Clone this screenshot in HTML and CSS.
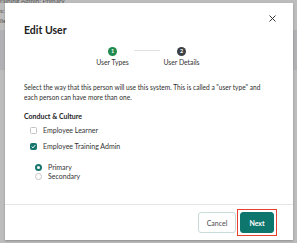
FILE: index.html
```html
<!DOCTYPE html>
<html lang="en">
<head>
  <meta charset="UTF-8">
  <meta name="viewport" content="width=device-width, initial-scale=1.0">
  <title>Edit User</title>
  <link rel="stylesheet" href="styles.css">
</head>
<body>

  <!-- Page behind the modal -->
  <div class="page">
    <div class="page-top">
      <p>raining Admin: Primary</p>
      <p>s:</p>
      <p>lle</p>
    </div>
    <div class="page-band"></div>
  </div>

  <!-- Edit User Modal -->
  <div class="modal">
    <button class="close-btn" aria-label="Close">
      <svg width="7" height="7" viewBox="0 0 7 7">
        <path d="M0.5 0.5 L6.5 6.5 M6.5 0.5 L0.5 6.5" stroke="#333" stroke-width="1" fill="none"/>
      </svg>
    </button>

    <div class="modal-body">
      <h2 class="modal-title">Edit User</h2>

      <div class="stepper">
        <div class="step step-done">
          <span class="step-num">1</span>
          <span class="step-label">User Types</span>
        </div>
        <div class="step-line"></div>
        <div class="step">
          <span class="step-num">2</span>
          <span class="step-label">User Details</span>
        </div>
      </div>

      <p class="intro">Select the way that this person will use this system. This is called a "user type" and each person can have more than one.</p>

      <h3 class="group-title">Conduct &amp; Culture</h3>
      <div class="check-list">
        <label class="check-row"><span class="checkbox"></span>Employee Learner</label>
        <label class="check-row">
          <span class="checkbox checked">
            <svg width="5" height="5" viewBox="0 0 5 5">
              <path d="M0.7 2.6 L2 3.8 L4.3 1.1" stroke="#fff" stroke-width="1" fill="none"/>
            </svg>
          </span>Employee Training Admin
        </label>
      </div>

      <div class="radio-list">
        <label class="radio-row"><span class="radio selected"></span>Primary</label>
        <label class="radio-row"><span class="radio"></span>Secondary</label>
      </div>
    </div>

    <div class="modal-footer">
      <button class="btn btn-cancel">Cancel</button>
      <span class="highlight">
        <button class="btn btn-next">Next</button>
      </span>
    </div>
  </div>

</body>
</html>
```

FILE: styles.css
```css
* {
  margin: 0;
  padding: 0;
  box-sizing: border-box;
}

body {
  font-family: Lato, "Open Sans", sans-serif;
  background-color: #bcbcbc;
  color: #333;
  height: 243px;
  overflow: hidden;
}

/* Page behind the overlay */
.page-top {
  display: flow-root;
  height: 30px;
  font-size: 6.5px;
  line-height: 10px;
  color: #555;
}

.page-top p:first-child {
  margin-top: -4px;
}

.page-band {
  height: 40px;
  background-color: #b1b1b5;
}

/* Modal */
.modal {
  position: absolute;
  left: 5px;
  top: 3px;
  width: 288px;
  height: 237px;
  background-color: #fff;
  display: flex;
  flex-direction: column;
  box-shadow: 0 1px 2px rgba(0, 0, 0, 0.25);
}

.close-btn {
  position: absolute;
  top: 9px;
  right: 15px;
  width: 12px;
  height: 12px;
  border: none;
  background: none;
  display: flex;
  align-items: center;
  justify-content: center;
  cursor: pointer;
}

.modal-body {
  flex: 1;
  padding: 21px 19px 0;
}

.modal-title {
  font-size: 10.5px;
  font-weight: 700;
  line-height: 12px;
  color: #222;
}

/* Stepper */
.stepper {
  display: flex;
  margin: 11px 0 0 67px;
}

.step {
  display: flex;
  flex-direction: column;
  align-items: center;
  width: 43px;
}

.step-num {
  width: 9px;
  height: 9px;
  border-radius: 50%;
  background-color: #3b4046;
  color: #fff;
  font-size: 5.5px;
  font-weight: 700;
  line-height: 9px;
  text-align: center;
}

.step-done .step-num {
  background-color: #1d8a4e;
}

.step-label {
  margin-top: 2px;
  font-size: 6.8px;
  line-height: 8px;
  color: #333;
  white-space: nowrap;
}

.step-line {
  width: 26px;
  height: 1px;
  margin-top: 3px;
  background-color: #e2e2e2;
}

/* Body text */
.intro {
  margin-top: 16px;
  max-width: 246px;
  font-size: 6.6px;
  line-height: 10px;
  color: #2e2e2e;
}

.group-title {
  margin-top: 9px;
  font-size: 7px;
  font-weight: 700;
  line-height: 10px;
  color: #222;
}

/* Checkboxes */
.check-list {
  display: flex;
  flex-direction: column;
  gap: 6px;
  margin-top: 4px;
  padding-left: 6px;
}

.check-row, .radio-row {
  display: flex;
  align-items: center;
  gap: 6px;
  font-size: 7px;
  color: #333;
}

.check-row {
  height: 10px;
}

.checkbox {
  width: 7px;
  height: 7px;
  border: 1px solid #c4c4c4;
  border-radius: 1.5px;
  background-color: #fff;
  display: flex;
  align-items: center;
  justify-content: center;
}

.checkbox.checked {
  background-color: #17766e;
  border-color: #17766e;
}

/* Radios */
.radio-list {
  display: flex;
  flex-direction: column;
  margin-top: 11.5px;
  padding-left: 11px;
}

.radio-row {
  height: 9px;
}

.radio {
  width: 7px;
  height: 7px;
  border-radius: 50%;
  border: 1px solid #c4c4c4;
  background-color: #fff;
}

.radio.selected {
  border: 2px solid #17766e;
}

/* Footer */
.modal-footer {
  display: flex;
  justify-content: flex-end;
  align-items: center;
  gap: 1px;
  padding: 4px 16px 4px;
  border-top: 1px solid #e6e6e6;
}

.btn {
  height: 21px;
  border-radius: 3px;
  font-family: inherit;
  font-size: 7px;
  cursor: pointer;
}

.btn-cancel {
  width: 38px;
  background-color: #fff;
  border: 1px solid #c9dcda;
  color: #4a4a4a;
}

.highlight {
  display: flex;
  padding: 2px;
  border: 1px solid #e8402e;
}

.btn-next {
  width: 34px;
  background-color: #0f766e;
  border: 1px solid #0f766e;
  color: #fff;
  font-weight: 700;
}
```
